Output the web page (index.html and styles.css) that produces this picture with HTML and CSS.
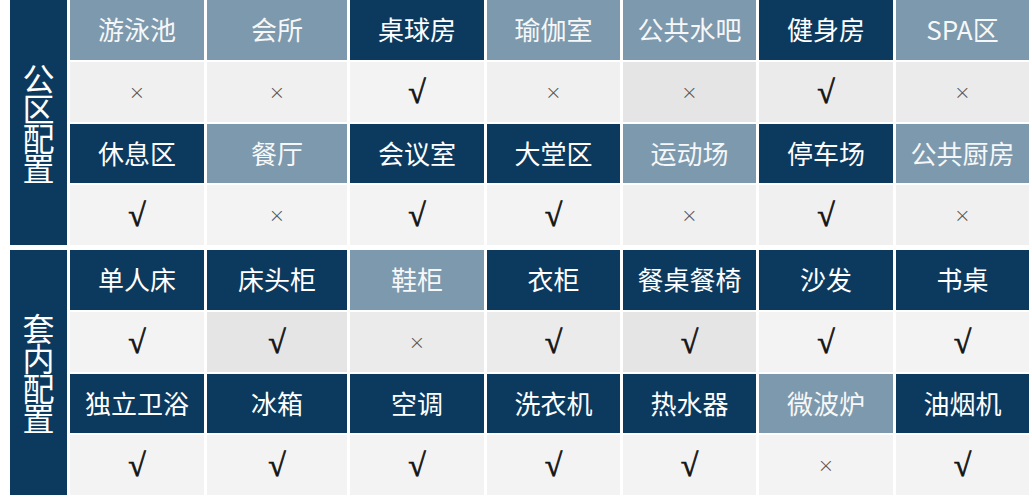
FILE: index.html
```html
<!DOCTYPE html>
<html lang="zh-CN">
<head>
<meta charset="utf-8">
<title>配置表</title>
<link rel="stylesheet" href="styles.css">
</head>
<body>
<div class="table">
  <div class="section">
    <div class="label">公区配置</div>
    <div class="cell light">游泳池</div>
    <div class="cell light">会所</div>
    <div class="cell dark">桌球房</div>
    <div class="cell light">瑜伽室</div>
    <div class="cell light">公共水吧</div>
    <div class="cell dark">健身房</div>
    <div class="cell light">SPA区</div>

    <div class="val v1"><span class="no">×</span></div>
    <div class="val v1"><span class="no">×</span></div>
    <div class="val v0"><span class="yes">√</span></div>
    <div class="val v1"><span class="no">×</span></div>
    <div class="val v3"><span class="no">×</span></div>
    <div class="val v2"><span class="yes">√</span></div>
    <div class="val v2"><span class="no">×</span></div>

    <div class="cell dark">休息区</div>
    <div class="cell light">餐厅</div>
    <div class="cell dark">会议室</div>
    <div class="cell dark">大堂区</div>
    <div class="cell light">运动场</div>
    <div class="cell dark">停车场</div>
    <div class="cell light">公共厨房</div>

    <div class="val v0"><span class="yes">√</span></div>
    <div class="val v0"><span class="no">×</span></div>
    <div class="val v0"><span class="yes">√</span></div>
    <div class="val v0"><span class="yes">√</span></div>
    <div class="val v1"><span class="no">×</span></div>
    <div class="val v1"><span class="yes">√</span></div>
    <div class="val v1"><span class="no">×</span></div>
  </div>

  <div class="section">
    <div class="label">套内配置</div>
    <div class="cell dark">单人床</div>
    <div class="cell dark">床头柜</div>
    <div class="cell light">鞋柜</div>
    <div class="cell dark">衣柜</div>
    <div class="cell dark">餐桌餐椅</div>
    <div class="cell dark">沙发</div>
    <div class="cell dark">书桌</div>

    <div class="val v0"><span class="yes">√</span></div>
    <div class="val v3"><span class="yes">√</span></div>
    <div class="val v2"><span class="no">×</span></div>
    <div class="val v2"><span class="yes">√</span></div>
    <div class="val v3"><span class="yes">√</span></div>
    <div class="val v0"><span class="yes">√</span></div>
    <div class="val v0"><span class="yes">√</span></div>

    <div class="cell dark">独立卫浴</div>
    <div class="cell dark">冰箱</div>
    <div class="cell dark">空调</div>
    <div class="cell dark">洗衣机</div>
    <div class="cell dark">热水器</div>
    <div class="cell light">微波炉</div>
    <div class="cell dark">油烟机</div>

    <div class="val v0"><span class="yes">√</span></div>
    <div class="val v0"><span class="yes">√</span></div>
    <div class="val v0"><span class="yes">√</span></div>
    <div class="val v0"><span class="yes">√</span></div>
    <div class="val v0"><span class="yes">√</span></div>
    <div class="val v0"><span class="no">×</span></div>
    <div class="val v0"><span class="yes">√</span></div>
  </div>
</div>
</body>
</html>
```
FILE: styles.css
```css
html, body {
  margin: 0;
  padding: 0;
  background: #ffffff;
}

body {
  padding: 0 0 0 10px;
  font-family: "Noto Sans CJK SC", "Noto Sans", sans-serif;
}

.table {
  display: flex;
  flex-direction: column;
  gap: 5px;
  width: 1019px;
}

.section {
  display: grid;
  grid-template-columns: 57px 134px 140px 134px 133px 133px 134px 133px;
  grid-template-rows: repeat(4, 1fr);
  column-gap: 3px;
  row-gap: 2px;
  height: 245px;
}

.label {
  grid-row: 1 / span 4;
  background: #0c3a5f;
  color: #ffffff;
  font-size: 32px;
  font-weight: 400;
  line-height: 30px;
  writing-mode: vertical-rl;
  text-orientation: upright;
  display: flex;
  align-items: center;
  justify-content: center;
  letter-spacing: -2px;
}

.cell {
  display: flex;
  align-items: center;
  justify-content: center;
  color: #ffffff;
  font-size: 26px;
  font-weight: 400;
  white-space: nowrap;
  padding-bottom: 2px;
}

.dark {
  background: #0c3a5f;
}

.light {
  background: #7d99ad;
  color: #f6f7f8;
}

.val {
  display: flex;
  align-items: center;
  justify-content: center;
}

.v0 { background: #f3f3f4; }
.v1 { background: #f0f0f1; }
.v2 { background: #ebebec; }
.v3 { background: #e5e5e6; }

.yes {
  font-family: "Liberation Serif", "DejaVu Serif", serif;
  font-size: 32px;
  font-weight: bold;
  color: #141414;
  line-height: 1;
  -webkit-text-stroke: 0.7px #141414;
}

.no {
  font-family: "DejaVu Sans", sans-serif;
  font-size: 20px;
  font-weight: 300;
  color: #555555;
  line-height: 1;
}
```
